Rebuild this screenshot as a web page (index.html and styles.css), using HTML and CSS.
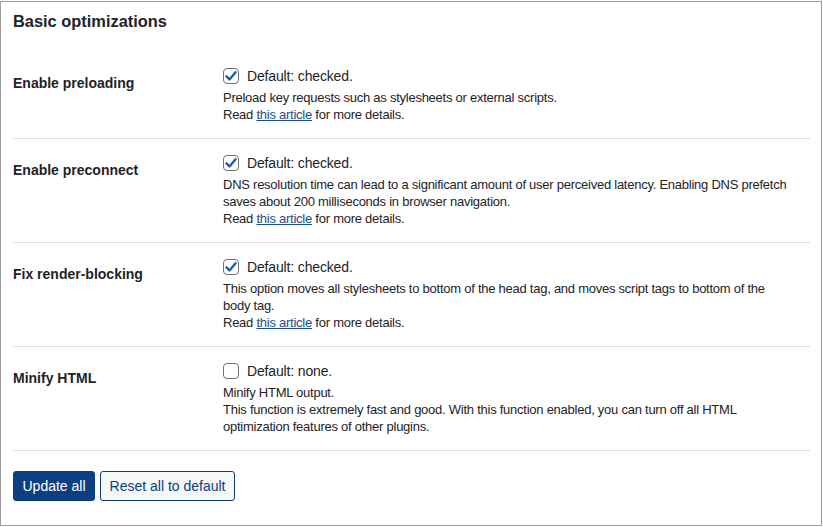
FILE: index.html
```html
<!DOCTYPE html>
<html lang="en">
<head>
<meta charset="utf-8">
<title>Basic optimizations</title>
<link rel="stylesheet" href="styles.css">
</head>
<body>
<div class="panel">
  <h2 class="title">Basic optimizations</h2>
  <div class="settings">
    <div class="row">
      <div class="label">Enable preloading</div>
      <div class="field">
        <label class="check"><span class="box"><svg viewBox="0 0 16 16" width="16" height="16"><path d="M3.4 8.3 L6.5 11.4 L12.6 4.2" fill="none" stroke="#1f57a8" stroke-width="2.3" stroke-linecap="round" stroke-linejoin="round"/></svg></span>Default: checked.</label>
        <p class="desc">Preload key requests such as stylesheets or external scripts.<br>Read <a href="#">this article</a> for more details.</p>
      </div>
    </div>
    <div class="row">
      <div class="label">Enable preconnect</div>
      <div class="field">
        <label class="check"><span class="box"><svg viewBox="0 0 16 16" width="16" height="16"><path d="M3.4 8.3 L6.5 11.4 L12.6 4.2" fill="none" stroke="#1f57a8" stroke-width="2.3" stroke-linecap="round" stroke-linejoin="round"/></svg></span>Default: checked.</label>
        <p class="desc">DNS resolution time can lead to a significant amount of user perceived latency. Enabling DNS prefetch saves about 200 milliseconds in browser navigation.<br>Read <a href="#">this article</a> for more details.</p>
      </div>
    </div>
    <div class="row">
      <div class="label">Fix render-blocking</div>
      <div class="field">
        <label class="check"><span class="box"><svg viewBox="0 0 16 16" width="16" height="16"><path d="M3.4 8.3 L6.5 11.4 L12.6 4.2" fill="none" stroke="#1f57a8" stroke-width="2.3" stroke-linecap="round" stroke-linejoin="round"/></svg></span>Default: checked.</label>
        <p class="desc">This option moves all stylesheets to bottom of the head tag, and moves script tags to bottom of the body tag.<br>Read <a href="#">this article</a> for more details.</p>
      </div>
    </div>
    <div class="row">
      <div class="label">Minify HTML</div>
      <div class="field">
        <label class="check"><span class="box"></span>Default: none.</label>
        <p class="desc">Minify HTML output.<br>This function is extremely fast and good. With this function enabled, you can turn off all HTML optimization features of other plugins.</p>
      </div>
    </div>
  </div>
  <div class="actions">
    <button class="btn primary" type="button">Update all</button>
    <button class="btn secondary" type="button">Reset all to default</button>
  </div>
</div>
</body>
</html>
```

FILE: styles.css
```css
html, body {
  margin: 0;
  padding: 0;
  background: #ffffff;
}

body {
  font-family: "Liberation Sans", Arial, sans-serif;
  color: #1d2327;
}

.panel {
  box-sizing: border-box;
  margin-top: 1px;
  width: 822px;
  height: 525px;
  border: 1px solid #9c9c9c;
  padding: 0 11px 0 12px;
}

.title {
  margin: 9px 0 21px;
  font-size: 16.4px;
  line-height: 20px;
  font-weight: bold;
}

.row {
  display: grid;
  grid-template-columns: 210px 1fr;
  border-bottom: 1px solid #e1e1e1;
}

.label {
  padding-top: 22px;
  font-size: 14px;
  line-height: 18px;
  font-weight: bold;
}

.field {
  padding: 16px 18px 15px 0;
}

.check {
  display: flex;
  align-items: center;
  gap: 8px;
  height: 16px;
  font-size: 14px;
  line-height: 16px;
  letter-spacing: -0.15px;
}

.box {
  box-sizing: border-box;
  width: 16px;
  height: 16px;
  border: 1px solid #6f7278;
  border-radius: 4px;
  background: #fff;
  display: flex;
  align-items: center;
  justify-content: center;
  overflow: hidden;
}

.box svg {
  display: block;
  flex: none;
}

.desc {
  margin: 5px 0 0;
  font-size: 13px;
  line-height: 17px;
  letter-spacing: -0.25px;
}

.desc a {
  color: #1a4e8e;
  text-decoration: underline;
}

.actions {
  display: flex;
  gap: 5px;
  padding-top: 20px;
}

.btn {
  box-sizing: border-box;
  height: 30px;
  padding: 0 8.5px;
  border-radius: 3px;
  font-family: "Liberation Sans", Arial, sans-serif;
  font-size: 14px;
  line-height: 28px;
  cursor: pointer;
}

.primary {
  background: #0b3f82;
  border: 1px solid #0b3f82;
  color: #ffffff;
}

.secondary {
  background: #f6f7f7;
  border: 1px solid #0b3f82;
  color: #0b3f82;
}
```
